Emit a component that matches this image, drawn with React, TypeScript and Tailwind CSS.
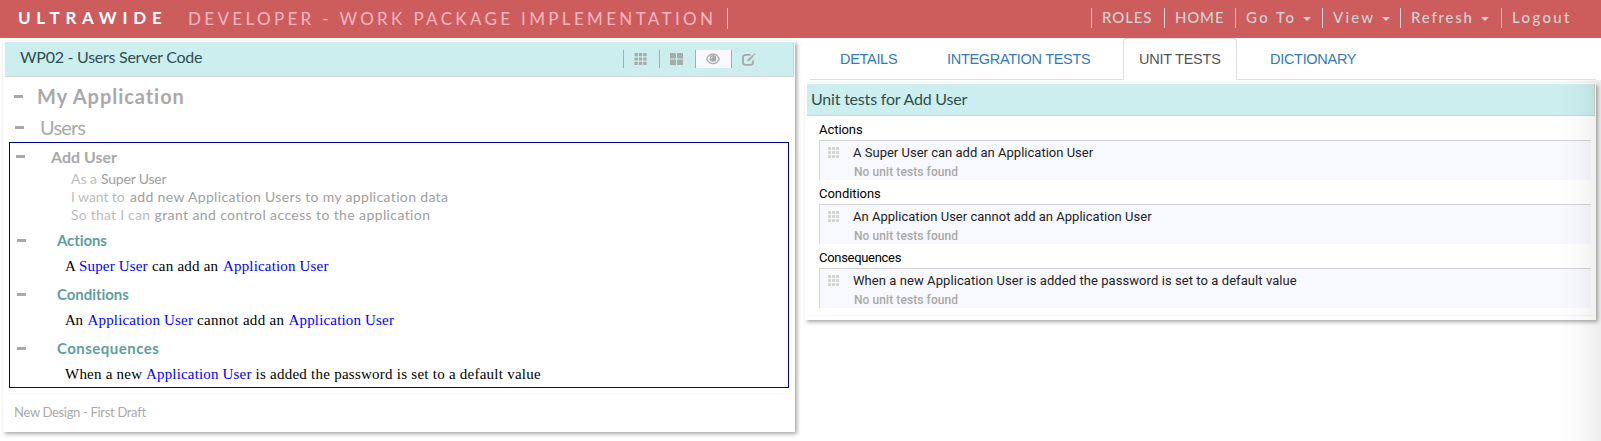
import type { ReactNode } from 'react';

function GridIcon({ className }: { className: string }) {
  return (
    <svg viewBox="0 0 12 12" className={className} fill="currentColor">
      {[0, 4.4, 8.8].map((y) =>
        [0, 4.4, 8.8].map((x) => <rect key={`${x}-${y}`} x={x} y={y} width="3.3" height="3.2" rx="0.5" />),
      )}
    </svg>
  );
}

function LargeGridIcon() {
  return (
    <svg viewBox="0 0 13 12" className="h-3 w-[13px]" fill="currentColor">
      {[0, 6.5].map((y) =>
        [0, 7].map((x) => <rect key={`${x}-${y}`} x={x} y={y} width="6" height="5.5" rx="0.6" />),
      )}
    </svg>
  );
}

function EyeIcon() {
  return (
    <svg viewBox="0 0 14 12" className="h-3 w-[14px]" fill="none" stroke="currentColor">
      <path d="M0.7 6C2 2.7 4.3 1.1 7 1.1S12 2.7 13.3 6C12 9.1 9.7 10.7 7 10.7S2 9.1 0.7 6Z" strokeWidth="1.3" />
      <circle cx="7" cy="5.4" r="3.3" fill="currentColor" stroke="none" />
      <path d="M5.3 5.5C5.3 4.5 5.8 3.9 6.6 3.7" stroke="#f8f8ff" strokeWidth="1" />
    </svg>
  );
}

function EditIcon() {
  return (
    <svg viewBox="0 0 14 13" className="h-[13px] w-[14px]" fill="none" stroke="currentColor">
      <path d="M8.5 1.9H3.6Q1 1.9 1 4.5V9.3Q1 11.9 3.6 11.9H8.4Q11 11.9 11 9.3V7.5" strokeWidth="1.9" />
      <path d="M5.3 8.5L6 6.3L10.7 1.7L12 3L7.4 7.7Z" fill="currentColor" stroke="none" />
      <path d="M11.3 1.1L12.2 0.2L13.7 1.6L12.7 2.5Z" fill="currentColor" stroke="none" />
    </svg>
  );
}

function Caret() {
  return (
    <svg viewBox="0 0 8 4" className="mt-0.5 ml-[7px] h-1 w-2" fill="currentColor">
      <path d="M0 0H8L4 4Z" />
    </svg>
  );
}

function NavItem({ className, children }: { className: string; children: ReactNode }) {
  return (
    <div className={`flex h-5 shrink-0 items-center border-l border-[#d3d3d3] pb-px pl-[10px] ${className}`}>{children}</div>
  );
}

function Dash() {
  return <span className="h-[3px] w-[9px] shrink-0 bg-[#a9a9a9]" />;
}

function Term({ className = '', children }: { className?: string; children: ReactNode }) {
  return <span className={`shrink-0 tracking-[0.17px] text-[#0000ff] ${className}`}>{children}</span>;
}

function Section({ title, titleClass, children }: { title: string; titleClass: string; children: ReactNode }) {
  return (
    <div>
      <div className="flex h-8 items-center pl-[7px] text-[#a9a9a9]">
        <Dash />
        <span className={`ml-[31px] text-[15px] font-bold text-[#5f9ea0] ${titleClass}`}>{title}</span>
      </div>
      <div className="flex h-[22px] items-center pb-[2px] pl-[55px] font-['Liberation_Serif',serif] text-[15px] whitespace-nowrap text-black">
        {children}
      </div>
    </div>
  );
}

function TestGroup({ title, titleClass, text, textClass }: { title: string; titleClass: string; text: string; textClass: string }) {
  return (
    <div className="flex h-16 flex-col">
      <div className={`h-6 text-[13px] leading-[27px] text-black ${titleClass}`}>{title}</div>
      <div className="h-10 border-t border-l border-[#d3d3d3] bg-[#f8f8ff]">
        <div className="flex h-[23px] items-center pl-2">
          <GridIcon className="h-[11px] w-[11px] text-[#d3d3d3]" />
          <span className={`ml-[14px] text-[13px] whitespace-nowrap text-[#222] ${textClass}`}>{text}</span>
        </div>
        <div className="pl-[34px] text-[12px] leading-4 font-medium tracking-[0.08px] text-[#a9a9a9]">
          No unit tests found
        </div>
      </div>
    </div>
  );
}

export default function App() {
  return (
    <div className="relative flex h-[441px] w-[1601px] flex-col overflow-hidden bg-white font-['Lato',sans-serif]">
      <header className="flex h-[38px] shrink-0 items-start bg-[#cd5c5c] whitespace-nowrap">
        <div className="w-[169px] shrink-0 pl-[18px] text-[17px] leading-[35px] font-bold tracking-[5.75px] text-white">ULTRAWIDE</div>
        <div className="mt-2 flex h-[21px] w-[559px] shrink-0 items-center border-r border-[#d3d3d3] pl-[19px] text-[17px] tracking-[3.34px] text-[#ffb6c1]">
          DEVELOPER - WORK PACKAGE IMPLEMENTATION
        </div>
        <nav className="mt-2 ml-auto flex text-[15px] font-medium text-[#d3d3d3]">
          <NavItem className="w-[73px] tracking-[0.9px]">ROLES</NavItem>
          <NavItem className="w-[71px] tracking-[0.8px]">HOME</NavItem>
          <NavItem className="w-[87px] tracking-[2.4px]">Go To<Caret /></NavItem>
          <NavItem className="w-[78px] tracking-[2.2px]">View<Caret /></NavItem>
          <NavItem className="w-[101px] tracking-[1.8px]">Refresh<Caret /></NavItem>
          <NavItem className="w-[100px] tracking-[2.35px]">Logout</NavItem>
        </nav>
      </header>

      <main className="flex min-h-0 flex-1">
        <section className="mt-[3px] ml-[3px] flex h-[391px] w-[792px] shrink-0 flex-col bg-white px-[2px] pt-px shadow-[2px_2px_4px_rgba(0,0,0,0.35)]">
          <div className="flex h-[35px] w-[789px] shrink-0 items-center border-r border-b border-[#d3d3d3] bg-[#cceeee] pl-[15px]">
            <h1 className="w-[603px] pb-1 text-[16px] tracking-[-0.26px] text-[#2f4f4f]">WP02 - Users Server Code</h1>
            <div className="flex h-[18px] text-[#a9a9a9]">
              <div className="flex w-9 items-center border-l border-[#a9a9a9] pl-[10px]"><GridIcon className="h-3 w-[13px]" /></div>
              <div className="flex w-9 items-center border-l border-[#a9a9a9] pl-[10px]"><LargeGridIcon /></div>
              <div className="flex w-[37px] items-center border-x border-[#a9a9a9] bg-[#f8f8ff] pb-px pl-[10px]"><EyeIcon /></div>
              <div className="flex items-center pl-[10px]"><EditIcon /></div>
            </div>
          </div>

          <div className="flex h-[35px] shrink-0 items-center pt-[3px] pl-[9px] text-[#a9a9a9]">
            <Dash />
            <span className="ml-[14px] text-[20px] font-bold tracking-[0.95px]">My Application</span>
          </div>
          <div className="flex h-[30px] shrink-0 items-center pl-[10px] text-[#a9a9a9]">
            <Dash />
            <span className="ml-[16px] text-[20px] tracking-[-0.83px]">Users</span>
          </div>

          <div className="ml-1 h-[246px] w-[780px] shrink-0 border border-[#00008b]">
            <div className="flex h-[27px] items-center pl-[6px] text-[#a9a9a9]">
              <Dash />
              <span className="ml-[26px] text-[16px] font-bold">Add User</span>
            </div>
            <div className="pl-[61px] text-[14px] leading-[18px] whitespace-nowrap text-[#a0a0a0]">
              <div className="flex h-[18px]">
                <span className="w-[30px] text-[#bcbcbc]">As a</span>
                <span className="tracking-[-0.2px]">Super User</span>
              </div>
              <div className="flex h-[18px]">
                <span className="w-[59px] tracking-[-0.08px] text-[#bcbcbc]">I want to</span>
                <span className="tracking-[0.34px]">add new Application Users to my application data</span>
              </div>
              <div className="flex h-[18px]">
                <span className="w-[83.5px] tracking-[0.22px] text-[#bcbcbc]">So that I can</span>
                <span className="tracking-[0.39px]">grant and control access to the application</span>
              </div>
            </div>
            <Section title="Actions" titleClass="tracking-[-0.1px]">
              <span className="w-[14px]">A</span>
              <Term className="w-[73px]">Super User</Term>
              <span className="w-[71px] tracking-[0.21px]">can add an</span>
              <Term>Application User</Term>
            </Section>
            <Section title="Conditions" titleClass="tracking-[-0.05px]">
              <span className="w-[22.5px] tracking-[-0.33px]">An</span>
              <Term className="w-[109.5px]">Application User</Term>
              <span className="w-[91.5px] tracking-[0.31px]">cannot add an</span>
              <Term>Application User</Term>
            </Section>
            <Section title="Consequences" titleClass="tracking-[0.48px]">
              <span className="w-[81px] tracking-[0.23px]">When a new</span>
              <Term className="w-[109.5px]">Application User</Term>
              <span className="tracking-[0.25px]">is added the password is set to a default value</span>
            </Section>
          </div>

          <div className="mt-[5px] flex flex-1 items-center border-t border-[#f8f8ff] pl-[9px] text-[13px] tracking-[-0.32px] text-[#a9a9a9]">
            New Design - First Draft
          </div>
        </section>

        <div className="ml-[10px] flex w-[791px] shrink-0 flex-col">
          <div className="ml-[5px] flex h-[42px] shrink-0 font-['Liberation_Sans',sans-serif] text-[14.5px] leading-[42px] whitespace-nowrap text-[#337ab7]">
            <div className="w-[137px] border-b border-[#ddd] pl-[30px] tracking-[-0.3px]">DETAILS</div>
            <div className="w-[176px] border-b border-[#ddd] tracking-[-0.3px]">INTEGRATION TESTS</div>
            <div className="w-[114px] rounded-t border border-b-0 border-[#ddd] pl-[15px] leading-[40px] tracking-[-0.25px] text-[#555]">UNIT TESTS</div>
            <div className="flex-1 border-b border-[#ddd] pl-[33px] tracking-[-0.3px]">DICTIONARY</div>
          </div>

          <section className="mt-[3px] h-[237px] shrink-0 bg-white px-[2px] pt-px shadow-[2px_2px_4px_rgba(0,0,0,0.35)]">
            <div className="h-8 w-[788px] border-r border-b border-[#d3d3d3] bg-[#cceeee] pl-1 text-[16px] leading-[30px] tracking-[-0.2px] text-[#2f4f4f]">
              Unit tests for Add User
            </div>
            <div className="mr-[3px] ml-3 h-[199px] font-['Roboto',sans-serif]">
              <TestGroup title="Actions" titleClass="tracking-[-0.05px]" text="A Super User can add an Application User" textClass="tracking-[0.01px]" />
              <TestGroup title="Conditions" titleClass="tracking-[-0.05px]" text="An Application User cannot add an Application User" textClass="tracking-[0.02px]" />
              <TestGroup title="Consequences" titleClass="tracking-[-0.3px]" text="When a new Application User is added the password is set to a default value" textClass="tracking-[0.07px]" />
            </div>
            <div className="h-px bg-[#f4f4fb]" />
          </section>
        </div>
      </main>

      <div className="pointer-events-none absolute top-[80px] right-0 bottom-0 w-11 bg-gradient-to-r from-black/0 via-black/[0.02] to-black/[0.07]" />
    </div>
  );
}
